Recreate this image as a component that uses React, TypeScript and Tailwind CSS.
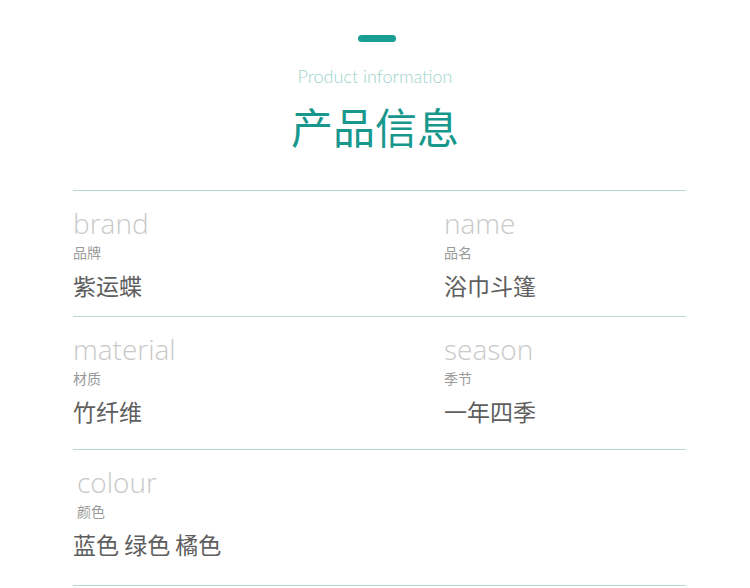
import React from 'react';

interface Field {
  en: string;
  zh: string;
  value: string;
}

const rows: { fields: Field[]; h: string; offset?: string }[] = [
  {
    h: 'h-[125px]',
    fields: [
      { en: 'brand', zh: '品牌', value: '紫运蝶' },
      { en: 'name', zh: '品名', value: '浴巾斗篷' },
    ],
  },
  {
    h: 'h-[132px]',
    fields: [
      { en: 'material', zh: '材质', value: '竹纤维' },
      { en: 'season', zh: '季节', value: '一年四季' },
    ],
  },
  {
    h: 'h-[135px]',
    offset: 'pl-[4px]',
    fields: [{ en: 'colour', zh: '颜色', value: '蓝色 绿色 橘色' }],
  },
];

const cjk = "font-['Noto_Sans_CJK_SC','Noto_Sans',sans-serif]";

const Divider = () => <div className="h-px bg-[#b5dad5]" />;

const FieldBlock: React.FC<{ field: Field; offset?: string }> = ({ field, offset = '' }) => (
  <div className="flex flex-col">
    <div className={`${offset} font-['Open_Sans','Noto_Sans',sans-serif] font-light text-[28px] leading-[32px] text-[#c9c9c9]`}>
      {field.en}
    </div>
    <div className={`${offset} ${cjk} text-[14px] leading-[16px] mt-[5px] text-[#9a9a9a]`}>{field.zh}</div>
    <div className={`${cjk} text-[23px] leading-[28px] mt-[11px] text-[#5e5e5e] whitespace-pre`}>{field.value}</div>
  </div>
);

export default function App() {
  return (
    <div className="w-[750px] h-[588px] bg-white overflow-hidden">
      <div className="flex flex-col items-center pt-[35px]">
        <div className="w-[38px] h-[7px] rounded-full bg-[#1a9e93] ml-[4px]" />
        <div className="mt-[23px] font-['Lato','Open_Sans',sans-serif] font-light text-[18px] leading-[22px] text-[#9dd3cb]">
          Product information
        </div>
        <div className={`mt-[12px] ${cjk} text-[42px] leading-[54px] text-[#18978c]`}>产品信息</div>
      </div>
      <div className="ml-[73px] w-[613px] mt-[37px]">
        <Divider />
        {rows.map((row, i) => (
          <React.Fragment key={i}>
            <div className={`${row.h} grid grid-cols-[371px_1fr] pt-[16px]`}>
              {row.fields.map((f) => (
                <FieldBlock key={f.en} field={f} offset={row.offset} />
              ))}
            </div>
            <Divider />
          </React.Fragment>
        ))}
      </div>
    </div>
  );
}
